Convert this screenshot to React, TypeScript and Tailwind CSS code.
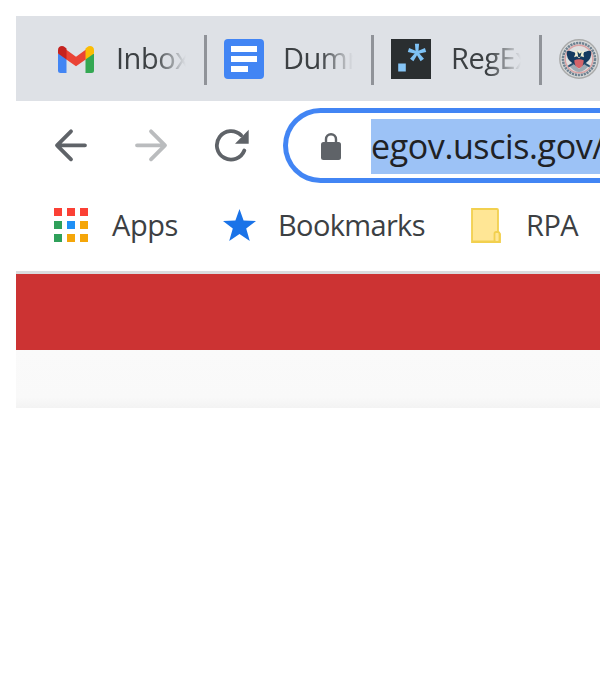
import type { ReactNode } from "react";

function Gmail() {
  return (
    <svg className="block h-[27px] w-[36px] shrink-0" viewBox="0 0 36 27">
      <path d="M0 8h8.5v19H2.5Q0 27 0 24.5Z" fill="#4285f4" />
      <path d="M27.5 8H36v16.5q0 2.5-2.5 2.5h-6Z" fill="#34a853" />
      <path d="M8 3.5 18 10.8l10-7.3v9.7l-10 7-10-7Z" fill="#ea4335" />
      <path d="M0 4C0 .5 4-1.2 7 1.2l1.5 1.2v11L0 7.5Z" fill="#c5221f" />
      <path d="M36 4c0-3.5-4-5.2-7-2.8l-1.5 1.2v11L36 7.5Z" fill="#fbbc04" />
    </svg>
  );
}

function Docs() {
  return (
    <svg className="block size-10 shrink-0" viewBox="0 0 40 40">
      <rect width="40" height="40" rx="4" fill="#4285f4" />
      <path d="M7 7h26v6H7ZM7 17h26v6H7ZM7 27h17v6H7Z" fill="#fff" />
    </svg>
  );
}

function Regex() {
  return (
    <svg className="block size-10 shrink-0" viewBox="0 0 40 40">
      <rect width="40" height="40" fill="#2a2e30" />
      <rect x="7.2" y="24.5" width="7.6" height="8" fill="#86c5f6" />
      <g fill="#7ec2f5">
        <path d="M23.9 4.7h4.2l-.8 9h-2.6Z" />
        <path d="M23.9 4.7h4.2l-.8 9h-2.6Z" transform="rotate(72 26 13.7)" />
        <path d="M23.9 4.7h4.2l-.8 9h-2.6Z" transform="rotate(144 26 13.7)" />
        <path d="M23.9 4.7h4.2l-.8 9h-2.6Z" transform="rotate(216 26 13.7)" />
        <path d="M23.9 4.7h4.2l-.8 9h-2.6Z" transform="rotate(288 26 13.7)" />
      </g>
    </svg>
  );
}

function Seal() {
  return (
    <svg className="block size-10 shrink-0" viewBox="0 0 40 40">
      <circle cx="20" cy="20" r="19.2" fill="#d9dada" stroke="#a9aaaa" strokeWidth="1.4" />
      <circle cx="20" cy="20" r="16" fill="none" stroke="#6f8291" strokeWidth="2.6" strokeDasharray="2.2 .8" />
      <circle cx="20" cy="20" r="13.8" fill="#dfe0e0" stroke="#dba3a4" strokeWidth="1.4" />
      <path d="M9.5 26q10.5 14 21 0l-4-2-6.5 6-6.5-6Z" fill="#9da9b3" />
      <path d="M7.8 12.5q2.2-1.6 5 0l3 1h8.4l3-1q2.8-1.6 5 0 .5 7-4.2 10.5L23 27h-6l-5-4q-4.7-3.5-4.2-10.5Z" fill="#143a60" />
      <path d="m15.5 12 2.5.8 2-2 2.4 2 3-.8-1 3 .6 3.2-3-1-2 2-2-2-3 1 1.3-3.2Z" fill="#f1eed2" />
      <path d="m18.3 12.2 2.3 2.6 2-1.5-1.2 4.7h-2.2Z" fill="#183f5b" />
      <path d="M15.3 21.3q4.7-2 9.4 0 0 6.5-4.7 8.3-4.7-1.8-4.7-8.3Z" fill="#d4646a" />
      <path d="m9.3 27.5 5-3m16.4 3-5-3" stroke="#264f70" strokeWidth="2" />
    </svg>
  );
}

function Separator() {
  return <div className="mt-[2px] h-[50px] w-[3px] shrink-0 bg-[#909399]" />;
}

function TabTitle({ children }: { children: ReactNode }) {
  return (
    <div className="-mt-0.5 w-[71px] shrink-0 overflow-hidden whitespace-nowrap text-[29px] leading-[40px] tracking-[-0.5px] text-[#3c4043] [mask-image:linear-gradient(to_right,black_38px,transparent_70px)]">
      {children}
    </div>
  );
}

const APP_COLORS = ["#fb4035", "#fb4035", "#fb4035", "#2fa05a", "#2090f5", "#f5a609", "#2fa05a", "#f5a609", "#f5a609"];

export default function App() {
  return (
    <main className="h-[697px] w-[600px] overflow-hidden bg-white pl-4 pt-4 font-['Open_Sans','Noto_Sans',sans-serif]">
      <div className="flex h-[85px] items-center overflow-hidden bg-[#dee1e6] pt-px">
        <div className="flex w-[188px] shrink-0 items-center pl-[42px]">
          <Gmail />
          <div className="ml-[22px]"><TabTitle>Inbox</TabTitle></div>
        </div>
        <Separator />
        <div className="flex w-[164px] shrink-0 items-center pl-[17px]">
          <Docs />
          <div className="ml-[19px]"><TabTitle>Dumm</TabTitle></div>
        </div>
        <Separator />
        <div className="flex w-[165px] shrink-0 items-center pl-[17px]">
          <Regex />
          <div className="ml-5"><TabTitle>RegEx</TabTitle></div>
        </div>
        <Separator />
        <div className="ml-[17px] shrink-0"><Seal /></div>
      </div>

      <div className="flex h-[82px] items-start overflow-hidden pl-[38px] pt-[7px]">
        <svg className="mt-5 h-[34px] w-[34px] shrink-0" viewBox="0 0 34 34" fill="none" stroke="#5f6368" strokeWidth="3.8" strokeLinecap="round" strokeLinejoin="round">
          <path d="M31 17.3H3M17 3.3l-14 14 14 14" />
        </svg>
        <svg className="ml-[46px] mt-5 h-[34px] w-[34px] shrink-0" viewBox="0 0 34 34" fill="none" stroke="#babcbe" strokeWidth="3.8" strokeLinecap="round" strokeLinejoin="round">
          <path d="M3 17.3h28M17 3.3l14 14-14 14" />
        </svg>
        <svg className="ml-[46px] mt-[21px] h-[34px] w-[35px] shrink-0" viewBox="0 0 35 34" fill="none">
          <path d="M30.3 21.5A14.2 14.2 0 1 1 27 6.2" stroke="#5f6368" strokeWidth="3.8" strokeLinecap="round" />
          <path d="M34.7.8v14H21Z" fill="#5f6368" />
        </svg>
        <div className="ml-[34px] flex h-[75px] w-[340px] shrink-0 rounded-l-full border-[5px] border-r-0 border-[#4285f4] pl-[33px] pt-[6px]">
          <svg className="mt-[14px] h-[27px] w-[20px] shrink-0" viewBox="0 0 20 27">
            <path d="M5 11V6.2a5 5 0 0 1 10 0V11" fill="none" stroke="#5f6368" strokeWidth="2.4" />
            <rect y="9" width="20" height="18" rx="2.5" fill="#5f6368" />
          </svg>
          <div className="ml-[30px] h-[55px] w-[260px] shrink-0 overflow-hidden whitespace-nowrap bg-[#9cc2f6] text-[34px] leading-[55px] tracking-[-0.4px] text-[#202124]">egov.uscis.gov/</div>
        </div>
      </div>

      <div className="flex h-[91px] items-center overflow-hidden border-b-[3px] border-[#dadcde] pl-[38px] pb-1 text-[29px] leading-[40px] text-[#3c4043]">
        <div className="grid shrink-0 grid-cols-[repeat(3,8px)] gap-[5px]">
          {APP_COLORS.map((color, i) => <div key={i} className="size-2" style={{ backgroundColor: color }} />)}
        </div>
        <span className="-mt-px ml-6 w-[111px] shrink-0 tracking-[-0.4px]">Apps</span>
        <svg className="h-[32px] w-[33px] shrink-0" viewBox="0 0 33 32">
          <path d="m16.5 0 4.1 11.6L33 12l-9.8 7.6L26.8 32l-10.3-7.1L6.2 32l3.6-12.4L0 12l12.4-.4Z" fill="#1a73e8" />
        </svg>
        <span className="-mt-px ml-[22px] w-[193px] shrink-0 tracking-[-0.65px]">Bookmarks</span>
        <svg className="mt-0.5 h-9 w-[31px] shrink-0" viewBox="0 0 31 36">
          <path d="M1 1h25q1 0 1 1v22l2 2v8H1Z" fill="#ffe695" stroke="#f2d04f" strokeWidth="1.8" />
          <path d="M1 33.5h25" stroke="#f2d04f" strokeWidth="2" />
          <rect x="23.5" y="24" width="5" height="10" rx="1.7" fill="#ffe695" stroke="#f2d04f" strokeWidth="1.8" />
        </svg>
        <span className="-mt-px ml-6 shrink-0 tracking-[-0.5px]">RPA</span>
      </div>
      <div className="h-[76px] bg-[#cc3333]" />
      <div className="h-[58px] bg-[linear-gradient(to_bottom,#fafafa_0,#f9f9f9_47px,#f3f3f3_58px)]" />
    </main>
  );
}
